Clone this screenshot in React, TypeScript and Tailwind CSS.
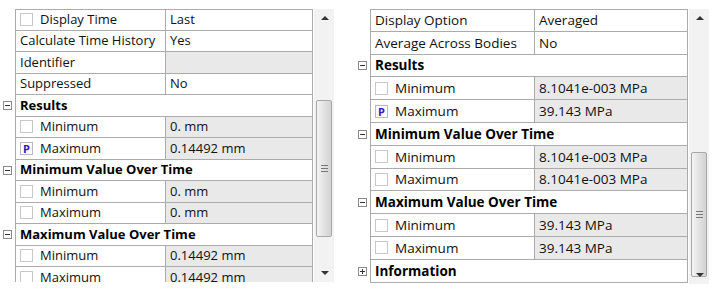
import React from 'react';

type Row =
  | { kind: 'prop'; label: string; value: string; box?: 'none' | 'empty' | 'p'; gray?: boolean }
  | { kind: 'group'; label: string; sign: '-' | '+' };

const leftRows: Row[] = [
  { kind: 'prop', label: 'Display Time', value: 'Last', box: 'empty' },
  { kind: 'prop', label: 'Calculate Time History', value: 'Yes' },
  { kind: 'prop', label: 'Identifier', value: '', gray: true },
  { kind: 'prop', label: 'Suppressed', value: 'No' },
  { kind: 'group', label: 'Results', sign: '-' },
  { kind: 'prop', label: 'Minimum', value: '0. mm', box: 'empty', gray: true },
  { kind: 'prop', label: 'Maximum', value: '0.14492 mm', box: 'p', gray: true },
  { kind: 'group', label: 'Minimum Value Over Time', sign: '-' },
  { kind: 'prop', label: 'Minimum', value: '0. mm', box: 'empty', gray: true },
  { kind: 'prop', label: 'Maximum', value: '0. mm', box: 'empty', gray: true },
  { kind: 'group', label: 'Maximum Value Over Time', sign: '-' },
  { kind: 'prop', label: 'Minimum', value: '0.14492 mm', box: 'empty', gray: true },
  { kind: 'prop', label: 'Maximum', value: '0.14492 mm', box: 'empty', gray: true },
];

const rightRows: Row[] = [
  { kind: 'prop', label: 'Display Option', value: 'Averaged' },
  { kind: 'prop', label: 'Average Across Bodies', value: 'No' },
  { kind: 'group', label: 'Results', sign: '-' },
  { kind: 'prop', label: 'Minimum', value: '8.1041e-003 MPa', box: 'empty', gray: true },
  { kind: 'prop', label: 'Maximum', value: '39.143 MPa', box: 'p', gray: true },
  { kind: 'group', label: 'Minimum Value Over Time', sign: '-' },
  { kind: 'prop', label: 'Minimum', value: '8.1041e-003 MPa', box: 'empty', gray: true },
  { kind: 'prop', label: 'Maximum', value: '8.1041e-003 MPa', box: 'empty', gray: true },
  { kind: 'group', label: 'Maximum Value Over Time', sign: '-' },
  { kind: 'prop', label: 'Minimum', value: '39.143 MPa', box: 'empty', gray: true },
  { kind: 'prop', label: 'Maximum', value: '39.143 MPa', box: 'empty', gray: true },
  { kind: 'group', label: 'Information', sign: '+' },
];

function SignBox({ sign }: { sign: '-' | '+' }) {
  return (
    <div className="w-[9px] h-[9px] border border-[#8a8a8a] bg-white flex items-center justify-center relative">
      <div className="absolute w-[5px] h-px bg-[#333]" />
      {sign === '+' && <div className="absolute w-px h-[5px] bg-[#333]" />}
    </div>
  );
}

function Box({ kind }: { kind: 'empty' | 'p' }) {
  if (kind === 'p') {
    return (
      <div className="w-[13px] h-[13px] border border-[#b8b8c8] bg-white flex items-center justify-center text-[11px] font-bold leading-none text-[#2222bb] shrink-0">
        P
      </div>
    );
  }
  return <div className="w-[13px] h-[13px] border border-[#c8c8c8] bg-white shrink-0" />;
}

function Scrollbar({ thumbTop, thumbHeight }: { thumbTop: number; thumbHeight: number }) {
  return (
    <div className="relative w-[20px] h-full bg-[#f2f2f2]">
      <div className="absolute left-[7px] top-[7px] w-0 h-0 border-l-[4px] border-r-[4px] border-b-[4px] border-l-transparent border-r-transparent border-b-[#333]" />
      <div
        className="absolute left-[2px] w-[16px] rounded-[2px] border border-[#a8a8a8] bg-gradient-to-r from-[#f4f4f4] via-[#e2e2e2] to-[#d2d2d2] flex flex-col items-center justify-center gap-[2px]"
        style={{ top: thumbTop, height: thumbHeight }}
      >
        <div className="w-[7px] h-px bg-[#777]" />
        <div className="w-[7px] h-px bg-[#777]" />
        <div className="w-[7px] h-px bg-[#777]" />
      </div>
      <div className="absolute left-[7px] bottom-[7px] w-0 h-0 border-l-[4px] border-r-[4px] border-t-[4px] border-l-transparent border-r-transparent border-t-[#333]" />
    </div>
  );
}

function Panel({
  rows,
  rowH,
  labelW,
  valueW,
  fontSize,
  height,
  thumbTop,
  thumbHeight,
}: {
  rows: Row[];
  rowH: number;
  labelW: number;
  valueW: number;
  fontSize: string;
  height: number;
  thumbTop: number;
  thumbHeight: number;
}) {
  return (
    <div className="flex items-start" style={{ height }}>
      <div className="flex flex-col h-full overflow-hidden">
        {rows.map((r, i) => (
          <div key={i} className="flex shrink-0" style={{ height: rowH }}>
            <div className="w-[15px] flex items-center justify-start pl-[3px]">
              {r.kind === 'group' && <SignBox sign={r.sign} />}
            </div>
            {r.kind === 'group' ? (
              <div
                className={`flex items-center bg-white border-x border-b border-[#ababab] pl-[4px] font-bold text-black ${fontSize} ${i === 0 ? 'border-t' : ''}`}
                style={{ width: labelW + valueW }}
              >
                {r.label}
              </div>
            ) : (
              <>
                <div
                  className={`flex items-center gap-[7px] bg-white border-l border-b border-[#ababab] pl-[4px] text-[#111] ${fontSize} ${i === 0 ? 'border-t' : ''}`}
                  style={{ width: labelW }}
                >
                  {r.box && r.box !== 'none' && <Box kind={r.box} />}
                  <span className="whitespace-nowrap">{r.label}</span>
                </div>
                <div
                  className={`flex items-center border-l border-r border-b border-[#ababab] pl-[4px] text-[#111] ${fontSize} ${r.gray ? 'bg-[#e9e9e9]' : 'bg-white'} ${i === 0 ? 'border-t' : ''}`}
                  style={{ width: valueW }}
                >
                  {r.value}
                </div>
              </>
            )}
          </div>
        ))}
      </div>
      <div className="ml-[1px] h-full">
        <Scrollbar thumbTop={thumbTop} thumbHeight={thumbHeight} />
      </div>
    </div>
  );
}

export default function App() {
  return (
    <div className="w-[720px] h-[294px] bg-white font-['Open_Sans',sans-serif] flex pt-[9px]">
      <div>
        <Panel
          rows={leftRows}
          rowH={21.5}
          labelW={150}
          valueW={148}
          fontSize="text-[13px]"
          height={273}
          thumbTop={91}
          thumbHeight={137}
        />
      </div>
      <div className="ml-[21px]">
        <Panel
          rows={rightRows}
          rowH={22.8}
          labelW={164}
          valueW={154}
          fontSize="text-[13.5px]"
          height={275}
          thumbTop={143}
          thumbHeight={125}
        />
      </div>
    </div>
  );
}
